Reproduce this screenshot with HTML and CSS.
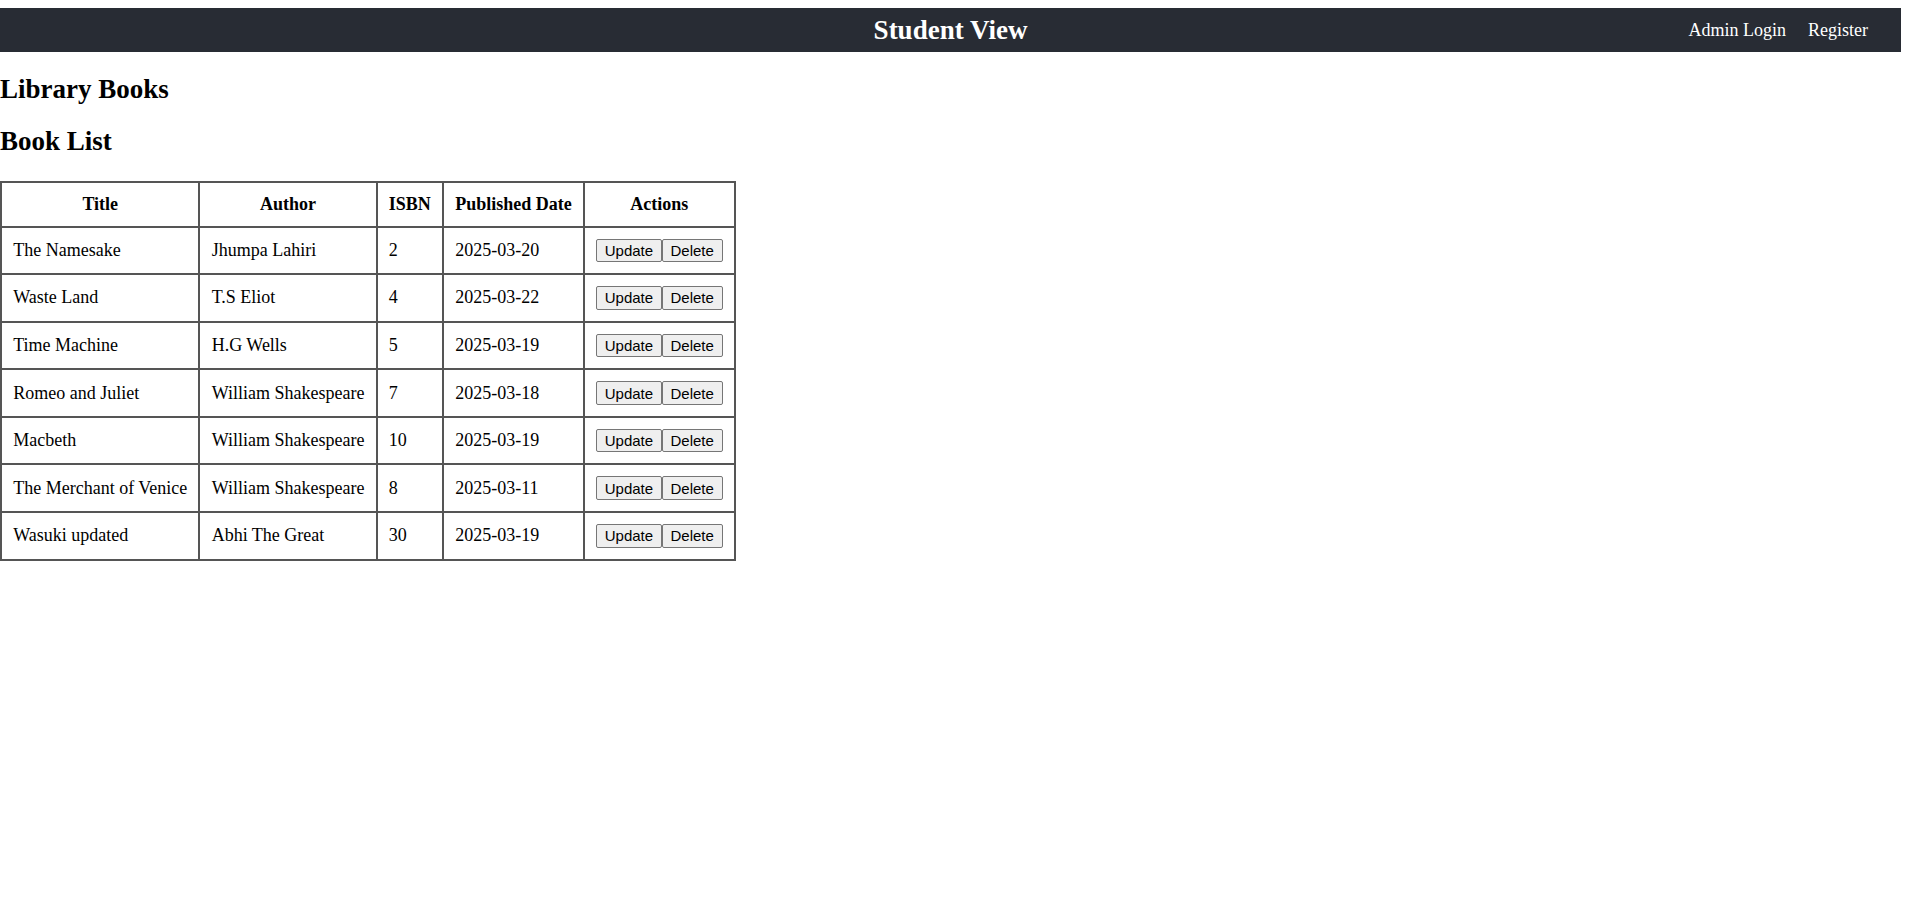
FILE: index.html
```html
<!DOCTYPE html>
<html lang="en">
<head>
<meta charset="utf-8">
<title>Student View</title>
<link rel="stylesheet" href="styles.css">
</head>
<body>
<header class="topbar">
  <span class="spacer"></span>
  <span class="brand">Student View</span>
  <nav class="nav">
    <a class="nav-link" href="#">Admin Login</a>
    <a class="nav-link" href="#">Register</a>
  </nav>
</header>
<main class="content">
  <h2 class="heading">Library Books</h2>
  <h2 class="heading">Book List</h2>
  <table class="books">
    <thead>
      <tr><th>Title</th><th>Author</th><th>ISBN</th><th>Published Date</th><th>Actions</th></tr>
    </thead>
    <tbody>
      <tr><td>The Namesake</td><td>Jhumpa Lahiri</td><td>2</td><td>2025-03-20</td><td class="actions"><button class="btn">Update</button><button class="btn">Delete</button></td></tr>
      <tr><td>Waste Land</td><td>T.S Eliot</td><td>4</td><td>2025-03-22</td><td class="actions"><button class="btn">Update</button><button class="btn">Delete</button></td></tr>
      <tr><td>Time Machine</td><td>H.G Wells</td><td>5</td><td>2025-03-19</td><td class="actions"><button class="btn">Update</button><button class="btn">Delete</button></td></tr>
      <tr><td>Romeo and Juliet</td><td>William Shakespeare</td><td>7</td><td>2025-03-18</td><td class="actions"><button class="btn">Update</button><button class="btn">Delete</button></td></tr>
      <tr><td>Macbeth</td><td>William Shakespeare</td><td>10</td><td>2025-03-19</td><td class="actions"><button class="btn">Update</button><button class="btn">Delete</button></td></tr>
      <tr><td>The Merchant of Venice</td><td>William Shakespeare</td><td>8</td><td>2025-03-11</td><td class="actions"><button class="btn">Update</button><button class="btn">Delete</button></td></tr>
      <tr><td>Wasuki updated</td><td>Abhi The Great</td><td>30</td><td>2025-03-19</td><td class="actions"><button class="btn">Update</button><button class="btn">Delete</button></td></tr>
    </tbody>
  </table>
</main>
</body>
</html>
```
FILE: styles.css
```css
html, body {
  margin: 0;
  padding: 0;
  background: #ffffff;
}

body {
  font-family: "Liberation Serif", "Times New Roman", serif;
  font-size: 18px;
  color: #000000;
}

.topbar {
  display: grid;
  grid-template-columns: 1fr auto 1fr;
  align-items: center;
  height: 44px;
  margin: 8px 9px 0 0;
  background: #282c34;
  color: #ffffff;
}

.brand {
  font-size: 27px;
  font-weight: bold;
}

.nav {
  display: flex;
  justify-content: flex-end;
  gap: 22px;
  padding-right: 33px;
}

.nav-link {
  color: #ffffff;
  text-decoration: none;
  font-size: 18px;
}

.content {
  padding: 0;
}

.heading {
  font-size: 27px;
  font-weight: bold;
  margin: 21.5px 0;
}

.books {
  border-collapse: collapse;
  margin-top: 23.5px;
}

.books th,
.books td {
  border: 2px solid #555555;
  padding: 11px 11.2px;
  text-align: left;
  vertical-align: middle;
  white-space: nowrap;
}

.books th {
  text-align: center;
  font-weight: bold;
}

.actions {
  font-size: 0;
}

.btn {
  font-family: "Liberation Sans", Arial, sans-serif;
  font-size: 15px;
  line-height: 17px;
  padding: 2.3px 7.7px;
  border: 1px solid #767676;
  border-radius: 2px;
  background: #efefef;
  color: #000000;
  margin: 0;
}
```
